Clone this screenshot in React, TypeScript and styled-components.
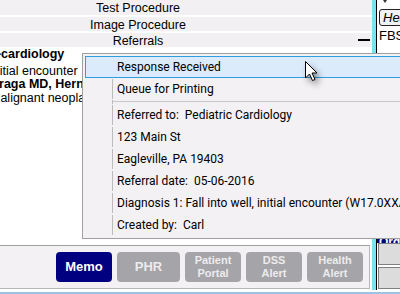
import styled, { createGlobalStyle } from "styled-components";

const GlobalStyle = createGlobalStyle`
  html, body {
    margin: 0;
    padding: 0;
  }
  body {
    width: 400px;
    height: 294px;
    overflow: hidden;
    background: #ffffff;
    font-family: "Liberation Sans", Arial, sans-serif;
  }
`;

const procedures = [
  { label: "Test Procedure", mark: false },
  { label: "Image Procedure", mark: false },
  { label: "Referrals", mark: true },
];

const patientLines = [
  { text: "s-cardiology", bold: true },
  { text: "initial encounter", bold: false },
  { text: "Braga MD, Hernandez", bold: true },
  { text: "Malignant neoplasm", bold: false },
];

const referralInfo = [
  "Referred to:  Pediatric Cardiology",
  "123 Main St",
  "Eagleville, PA 19403",
  "Referral date:  05-06-2016",
  "Diagnosis 1: Fall into well, initial encounter (W17.0XXA)",
  "Created by:  Carl",
];

const buttons = [
  { label: "Memo", active: true, width: 56 },
  { label: "PHR", active: false, width: 63 },
  { label: "Patient\nPortal", active: false, width: 56 },
  { label: "DSS\nAlert", active: false, width: 56 },
  { label: "Health\nAlert", active: false, width: 56 },
];

export default function App() {
  return (
    <>
      <GlobalStyle />
      <Screen>
        <Workspace>
          <Main>
            <ProcList>
              {procedures.map((p) => (
                <ProcRow key={p.label}>
                  <ProcLabel>{p.label}</ProcLabel>
                  <ProcExtra>{p.mark && <Dash />}</ProcExtra>
                </ProcRow>
              ))}
            </ProcList>
            <Body>
              <InfoLines>
                {patientLines.map((l, i) => (
                  <InfoLine key={l.text} bold={l.bold}>
                    <span>{l.text}</span>
                    {i === 0 && <DateText>05-06-16</DateText>}
                  </InfoLine>
                ))}
              </InfoLines>
            </Body>
            <ButtonBar>
              {buttons.map((b) => (
                <BarButton key={b.label} active={b.active} w={b.width} small={b.label.includes("\n")}>
                  {b.label}
                </BarButton>
              ))}
            </ButtonBar>
          </Main>
          <CyanBar />
          <Side>
            <Caret />
            <SideTab>Health</SideTab>
            <SideText>FBS</SideText>
            <SideSpacer />
            <SideHeader>Orders</SideHeader>
            <SideButton />
            <SideButton />
          </Side>
        </Workspace>
        <BottomGap />
        <StatusLine />

        <Popup>
          <MenuItem highlighted>
            <Gutter highlighted />
            <MenuLabel>Response Received</MenuLabel>
          </MenuItem>
          <MenuItem>
            <Gutter />
            <MenuLabel>Queue for Printing</MenuLabel>
          </MenuItem>
          <Separator>
            <Gutter />
            <SepLine />
          </Separator>
          {referralInfo.map((t) => (
            <MenuItem key={t}>
              <Gutter />
              <MenuLabel>{t}</MenuLabel>
            </MenuItem>
          ))}
        </Popup>

        <Cursor width="14" height="22" viewBox="0 0 14 22">
          <path
            d="M0.5 0.5 L0.5 17 L4.5 13 L7.5 19.5 L10 18.5 L7 12 L12 12 Z"
            fill="#ffffff"
            stroke="#000000"
            strokeWidth="1"
            strokeLinejoin="miter"
          />
        </Cursor>
      </Screen>
    </>
  );
}

const Screen = styled.div`
  position: relative;
  width: 400px;
  height: 294px;
  overflow: hidden;
  display: flex;
  flex-direction: column;
  background: #ffffff;
`;

const Workspace = styled.div`
  height: 290px;
  display: flex;
`;

const Main = styled.div`
  width: 372px;
  display: flex;
  flex-direction: column;
`;

const ProcList = styled.div`
  display: grid;
  grid-template-rows: 15px 14px 14px;
  row-gap: 2px;
`;

const ProcRow = styled.div`
  display: flex;
  background: #f3f0f4;
`;

const ProcLabel = styled.div`
  width: 276px;
  text-align: center;
  font-size: 12.5px;
  line-height: 14px;
  padding-top: 1px;
  color: #000;
`;

const ProcExtra = styled.div`
  flex: 1;
  display: flex;
  justify-content: flex-end;
  align-items: center;
  padding-right: 2px;
`;

const Dash = styled.div`
  width: 12px;
  height: 2px;
  background: #000;
`;

const Body = styled.div`
  flex: 1;
  background: #ffffff;
  padding-top: 1px;
  overflow: hidden;
`;

const InfoLines = styled.div`
  margin-left: -10px;
  padding-right: 2px;
`;

const InfoLine = styled.div<{ bold: boolean }>`
  display: flex;
  justify-content: space-between;
  font-size: 12.5px;
  line-height: 13.7px;
  font-weight: ${(p) => (p.bold ? 700 : 400)};
  color: #000;
  white-space: nowrap;
`;

const DateText = styled.span`
  font-weight: 400;
  font-size: 13px;
  padding-top: 3px;
`;

const ButtonBar = styled.div`
  height: 42px;
  margin-right: 2px;
  margin-bottom: 1px;
  border-top: 1px solid #a0a0a0;
  border-right: 1px solid #b8b8b8;
  border-bottom: 1px solid #b4b4b4;
  background: #f4f1f5;
  display: flex;
  justify-content: flex-end;
  align-items: center;
  gap: 5px;
  padding-right: 6px;
`;

const BarButton = styled.div<{ active: boolean; w: number; small: boolean }>`
  width: ${(p) => p.w}px;
  height: 30px;
  border-radius: 4px;
  background: ${(p) => (p.active ? "#000080" : "#a5a4a8")};
  color: ${(p) => (p.active ? "#ffffff" : "#ececee")};
  font-weight: 700;
  font-size: ${(p) => (p.small ? "11px" : "13px")};
  line-height: ${(p) => (p.small ? "13px" : "30px")};
  white-space: pre;
  text-align: center;
  display: flex;
  align-items: center;
  justify-content: center;
`;

const CyanBar = styled.div`
  width: 4px;
  background: #78e4f2;
`;

const Side = styled.div`
  width: 23px;
  border-left: 1px solid #000;
  display: flex;
  flex-direction: column;
  overflow: hidden;
`;

const Caret = styled.div`
  width: 0;
  height: 0;
  margin-left: 6px;
  border-left: 2px solid transparent;
  border-right: 2px solid transparent;
  border-top: 3px solid #333;
`;

const SideTab = styled.div`
  margin-top: 6px;
  margin-left: 2px;
  width: 40px;
  height: 15px;
  border: 1px solid #222;
  border-radius: 3px;
  background: #f2f2f2;
  font-style: italic;
  font-size: 13px;
  line-height: 15px;
  padding-left: 3px;
  white-space: nowrap;
`;

const SideText = styled.div`
  margin-top: 3px;
  padding-left: 2px;
  font-size: 13px;
  line-height: 14px;
  white-space: nowrap;
`;

const SideSpacer = styled.div`
  flex: 1;
`;

const SideHeader = styled.div`
  height: 8px;
  padding-top: 8px;
  padding-left: 2px;
  background: #000080;
  color: #fff;
  font-weight: 700;
  font-size: 12px;
  line-height: 14px;
  overflow: hidden;
  white-space: nowrap;
`;

const SideButton = styled.div`
  height: 20px;
  margin-left: 1px;
  margin-bottom: 2px;
  width: 40px;
  border: 1px solid #808080;
  background: #dcdcdc;
  &:last-child {
    margin-bottom: 1px;
  }
`;

const BottomGap = styled.div`
  height: 2px;
  background: #ffffff;
`;

const StatusLine = styled.div`
  height: 2px;
  background: #9cc3e6;
`;

const Popup = styled.div`
  position: absolute;
  left: 82px;
  top: 53px;
  width: 340px;
  padding: 2px;
  border: 1px solid #a0a0a0;
  background: #f4f1f5;
  font-family: Roboto, "Noto Sans", "Liberation Sans", sans-serif;
  font-size: 12px;
  color: #000;
`;

const MenuItem = styled.div<{ highlighted?: boolean }>`
  display: flex;
  height: 22px;
  box-sizing: border-box;
  border: 1px solid ${(p) => (p.highlighted ? "#2f9de0" : "transparent")};
  background: ${(p) => (p.highlighted ? "#dcebfc" : "transparent")};
`;

const Gutter = styled.div<{ highlighted?: boolean }>`
  width: 26px;
  border-right: 1px solid ${(p) => (p.highlighted ? "transparent" : "#bcbcbc")};
`;

const MenuLabel = styled.div`
  padding-left: 4px;
  line-height: 20px;
  white-space: pre;
`;

const Separator = styled.div`
  display: flex;
  height: 4px;
  padding: 0 1px;
`;

const SepLine = styled.div`
  flex: 1;
  height: 1px;
  margin-top: 1px;
  background: #c8c8c8;
`;

const Cursor = styled.svg`
  position: absolute;
  left: 305px;
  top: 61px;
  filter: drop-shadow(3px 4px 3px rgba(0, 0, 0, 0.45));
`;
